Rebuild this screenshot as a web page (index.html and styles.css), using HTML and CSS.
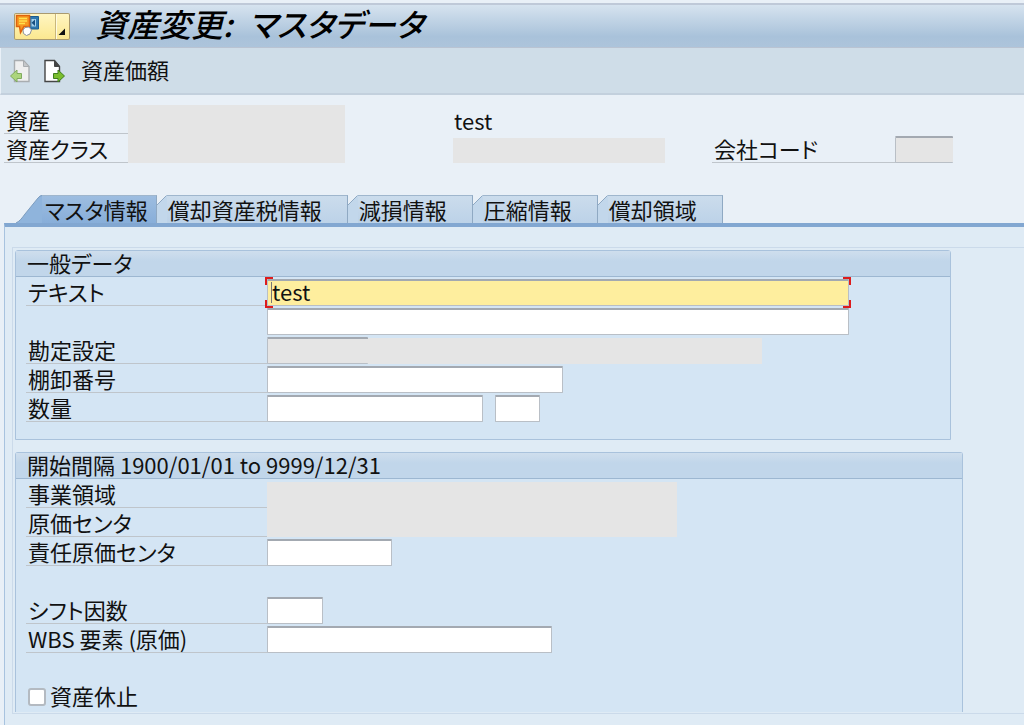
FILE: index.html
```html
<!DOCTYPE html>
<html lang="ja">
	<head>
		<meta charset="utf-8">
		<meta name="viewport" content="width=device-width, initial-scale=1">
		<title>資産変更: マスタデータ</title>
		<link rel="stylesheet" href="styles.css">
	</head>

	<body>
		<header class="titlebar">
			<button type="button" class="services" aria-label="サービス">
				<svg width="56" height="27" viewBox="0 0 56 27" aria-hidden="true">
					<path d="M15 3.500h9.500v12.500H15z" fill="#2f78ae" stroke="#1d5d91"/>
					<path d="M17.500 6h4.500v7.500h-4.500z" fill="#a5d0ea"/>
					<path d="M21 6.500v6.500L17.500 9.700z" fill="#174f80"/>
					<path d="M2.500 2.500h13v11H10L6.500 19.500l-1-6h-3z" fill="#f79a22" stroke="#e0620c" stroke-width="1.500"/>
					<path d="M5 5.500h8M5 8h8M5 10.500h6" stroke="#ffe14d" stroke-width="1.400"/>
					<path d="M9 17l2-2.500 4-.5 2.500 3-1.500 4-3.500 1.500L9.500 20.500z" fill="#fff" stroke="#8d919d"/>
					<path d="M41.500 1v25" stroke="#c9b77c"/>
					<path d="M42.500 1v25" stroke="#fffbe0"/>
					<path d="M51 15.500V22h-6.500z" fill="#111"/>
				</svg>
			</button>
			<h1 class="title">資産変更:&ensp;マスタデータ</h1>
		</header>

		<nav class="toolbar">
			<button type="button" class="tool" aria-label="前の資産" disabled>
				<svg width="22" height="26" viewBox="0 0 22 26" aria-hidden="true">
					<path d="M4.500 2.500h9l5.500 6v15H4.500z" fill="#efefef" stroke="#a9adb0" stroke-width="1.400"/>
					<path d="M13.500 2.500v6H19z" fill="#c6c8ca" stroke="#a9adb0"/>
					<path d="M.5 18L7 12v3.500h4.500v5H7V24z" fill="#acd57c" stroke="#80ab5f"/>
				</svg>
			</button>
			<button type="button" class="tool" aria-label="次の資産">
				<svg width="22" height="26" viewBox="0 0 22 26" aria-hidden="true">
					<path d="M2 2.500h9.500l5 6v15H2z" fill="#fff" stroke="#454545" stroke-width="1.400"/>
					<path d="M11.500 2.500v6h5z" fill="#444" stroke="#454545"/>
					<path d="M21.500 18L15 12v3.500h-4.500v5H15V24z" fill="#7bbd2d" stroke="#3f7f1d"/>
				</svg>
			</button>
			<button type="button" class="tool tool-text">資産価額</button>
		</nav>

		<section class="asset">
			<span class="label asset-no">資産</span>
			<span class="label asset-class">資産クラス</span>
			<div class="masked asset-value"></div>
			<span class="asset-name">test</span>
			<div class="masked asset-class-name"></div>
			<div class="company">
				<label class="label" for="company">会社コード</label>
				<input class="field readonly" type="text" id="company" readonly>
			</div>
		</section>

		<div class="tabs" role="tablist">
			<button type="button" class="tab active" role="tab" aria-selected="true">
				<svg width="26" height="28" viewBox="0 0 26 28" aria-hidden="true">
					<path d="M0 28C4 26 6 23 9 19L22 3Q24 0 26 0V28z" fill="#8fb4dc"/>
					<path d="M0 28C4 26 6 23 9 19L22 3Q24 .5 26 .5" fill="none" stroke="#7d9dbf"/>
				</svg>
				<span class="tab-text">マスタ情報</span>
			</button>
			<button type="button" class="tab" role="tab" aria-selected="false">
				<svg width="10" height="28" viewBox="0 0 10 28" aria-hidden="true">
					<path d="M0 10L10 0V28H0z" fill="#c2d7eb"/>
					<path d="M0 10L9.500 .5" fill="none" stroke="#8fa9c3"/>
				</svg>
				<span class="tab-text">償却資産税情報</span>
			</button>
			<button type="button" class="tab" role="tab" aria-selected="false">
				<svg width="10" height="28" viewBox="0 0 10 28" aria-hidden="true">
					<path d="M0 10L10 0V28H0z" fill="#c2d7eb"/>
					<path d="M0 10L9.500 .5" fill="none" stroke="#8fa9c3"/>
				</svg>
				<span class="tab-text">減損情報</span>
			</button>
			<button type="button" class="tab" role="tab" aria-selected="false">
				<svg width="10" height="28" viewBox="0 0 10 28" aria-hidden="true">
					<path d="M0 10L10 0V28H0z" fill="#c2d7eb"/>
					<path d="M0 10L9.500 .5" fill="none" stroke="#8fa9c3"/>
				</svg>
				<span class="tab-text">圧縮情報</span>
			</button>
			<button type="button" class="tab" role="tab" aria-selected="false">
				<svg width="10" height="28" viewBox="0 0 10 28" aria-hidden="true">
					<path d="M0 10L10 0V28H0z" fill="#c2d7eb"/>
					<path d="M0 10L9.500 .5" fill="none" stroke="#8fa9c3"/>
				</svg>
				<span class="tab-text">償却領域</span>
			</button>
		</div>

		<main class="panel" role="tabpanel">
			<div class="subscreen">
				<!-- General data -->
				<section class="group general">
					<h2 class="group-title">一般データ</h2>
					<div class="row">
						<label class="label" for="text1">テキスト</label>
						<span class="focus"><input class="field w-text" type="text" id="text1" value="test"></span>
					</div>
					<div class="row">
						<input class="field w-text second" type="text" aria-label="テキスト 2">
					</div>
					<div class="row">
						<label class="label" for="account">勘定設定</label>
						<input class="field readonly w-account" type="text" id="account" readonly>
						<div class="masked account-name"></div>
					</div>
					<div class="row">
						<label class="label" for="inventory">棚卸番号</label>
						<input class="field w-inventory" type="text" id="inventory">
					</div>
					<div class="row">
						<label class="label" for="quantity">数量</label>
						<input class="field w-quantity" type="text" id="quantity">
						<input class="field w-unit" type="text" aria-label="数量単位">
					</div>
				</section>

				<!-- Time-dependent data -->
				<section class="group interval">
					<h2 class="group-title">開始間隔 1900/01/01 to 9999/12/31</h2>
					<div class="row">
						<span class="label">事業領域</span>
						<div class="masked w-masked"></div>
					</div>
					<div class="row">
						<span class="label">原価センタ</span>
						<div class="masked w-masked tall"></div>
					</div>
					<div class="row">
						<label class="label" for="respcenter">責任原価センタ</label>
						<input class="field w-center" type="text" id="respcenter">
					</div>
					<div class="row"></div>
					<div class="row">
						<label class="label" for="shift">シフト因数</label>
						<input class="field w-shift" type="text" id="shift">
					</div>
					<div class="row">
						<label class="label" for="wbs">WBS 要素 (原価)</label>
						<input class="field w-wbs" type="text" id="wbs">
					</div>
					<div class="row"></div>
					<div class="row check-row">
						<input class="check" type="checkbox" id="shutdown">
						<label for="shutdown">資産休止</label>
					</div>
				</section>
			</div>
		</main>
	</body>
</html>
```
FILE: styles.css
```css
* {
	box-sizing: border-box;
}
body {
	background-color: #e9f0f7;
	color: #111;
	display: flex;
	flex-direction: column;
	font-family: "Noto Sans CJK JP", sans-serif;
	font-feature-settings: "palt";
	font-size: 22px;
	line-height: 24px;
	margin: 0;
	min-height: 100vh;
	padding-top: 3px;
}
button, input {
	color: inherit;
	font: inherit;
	font-feature-settings: inherit;
}
button {
	background: none;
	border: 0;
	padding: 0;
}
svg {
	display: block;
	flex: none;
}

/* Title and toolbar */
.titlebar {
	align-items: center;
	background: linear-gradient(#d6e3ef, #a9c2da 75%, #adc4db);
	border-bottom: 1px solid #b9c3d2;
	border-top: 2px solid #bfc9d8;
	display: flex;
	gap: 25px;
	height: 45px;
	padding-left: 14px;
}
.services {
	background: linear-gradient(#fff6c4, #fbe78e);
	border-radius: 2px;
	box-shadow: inset 0 0 0 1px #a99a70;
}
.title {
	color: #000;
	font-size: 32px;
	font-style: italic;
	font-weight: 500;
	line-height: 36px;
	margin: 0;
	padding-bottom: 6px;
	white-space: nowrap;
}
.toolbar {
	align-items: center;
	background-color: #cfdde8;
	border-bottom: 2px solid #c3d0dd;
	border-left: 1px solid #e9f0f7;
	display: flex;
	gap: 11px;
	height: 47px;
	padding-left: 9px;
}
.tool-text {
	margin-left: 5px;
	padding-bottom: 4px;
}

/* Asset header */
.asset {
	display: grid;
	grid-template-columns: 124px 217px 108fr 212px 47fr 241px 71fr;
	grid-template-rows: 29px 29px;
	padding: 10px 0 32px 4px;
}
.label {
	border-bottom: 1px solid #bfc5cb;
	height: 29px;
	padding: 2px 0 0 2px;
	white-space: nowrap;
}
.asset-class {
	grid-area: 2 / 1;
}
.masked {
	background-color: #e5e5e5;
}
.asset-value {
	grid-area: 1 / 2 / 3 / 3;
}
.asset-name {
	grid-area: 1 / 4;
	padding: 3px 0 0 1px;
}
.asset-class-name {
	align-self: end;
	grid-area: 2 / 4;
	height: 25px;
}
.company {
	align-items: end;
	display: grid;
	grid-area: 2 / 6;
	grid-template-columns: 1fr 58px;
}

/* Fields */
.field {
	background-color: #fff;
	border: 1px solid #b9bfc6;
	border-radius: 1px;
	border-top: 2px solid #a3a9b1;
	height: 27px;
	line-height: 20px;
	max-width: 100%;
	min-width: 0;
	outline: 0;
	padding: 0 4px 4px;
}
.field.readonly {
	background-color: #e5e5e5;
	border-right: 0;
}
.w-text {
	width: 582px;
}
.w-account {
	width: 101px;
}
.w-inventory {
	width: 296px;
}
.w-quantity {
	width: 216px;
}
.w-unit {
	margin-left: 12px;
	width: 45px;
}
.w-masked {
	height: 26px;
	width: 410px;
}
.w-masked.tall {
	height: 29px;
}
.w-center {
	width: 125px;
}
.w-shift {
	width: 56px;
}
.w-wbs {
	width: 285px;
}
.account-name {
	height: 26px;
	width: 394px;
}
.focus {
	display: flex;
	position: relative;
}
.focus .field {
	background-color: #feee9e;
}
/* red corner marks */
.focus::after {
	--red: linear-gradient(#dd1c1c, #dd1c1c);
	background:
		var(--red) left top / 8px 2px, var(--red) left top / 2px 8px,
		var(--red) right top / 8px 2px, var(--red) right top / 2px 8px,
		var(--red) left bottom / 8px 2px, var(--red) left bottom / 2px 8px,
		var(--red) right bottom / 8px 2px, var(--red) right bottom / 2px 8px;
	background-repeat: no-repeat;
	content: "";
	inset: -2px;
	pointer-events: none;
	position: absolute;
}
/* text cursor */
.focus::before {
	background-color: #777;
	bottom: 3px;
	content: "";
	left: 4px;
	position: absolute;
	top: 3px;
	width: 1px;
}

/* Tabs */
.tabs {
	display: flex;
	padding-left: 16px;
}
.tab {
	display: flex;
	height: 28px;
}
.tab-text {
	background: linear-gradient(#cbdcec, #bcd2e8);
	border-right: 1px solid #8fa9c3;
	border-top: 1px solid #9fb6cd;
	height: 28px;
	padding: 1px 25px 0 1px;
	white-space: nowrap;
}
.tab.active .tab-text {
	background: linear-gradient(#9dbde0, #88aed9);
	padding: 1px 8px 0 3px;
}
.panel {
	background-color: #dfebf5;
	border-left: 1px solid #a8c3df;
	border-top: 4px solid #82a7d1;
	flex: 1;
	margin-left: 4px;
	padding: 20px 0 11px 7px;
}
.subscreen {
	border: 1px solid #cbdaea;
	border-right: 0;
	padding: 2px 0 1px 2px;
}

/* Group boxes */
.group {
	background-color: #d4e5f4;
	border: 1px solid #a9c2dc;
	border-radius: 3px 3px 0 0;
}
.general {
	margin: 0 73px 12px 0;
	padding-bottom: 17px;
}
.interval {
	border-bottom: 0;
	margin-right: 61px;
	padding-bottom: 1px;
}
.group-title {
	background: linear-gradient(#cfdeed, #c1d6ea 40%, #c1d6ea);
	border-bottom: 1px solid #9db7d1;
	font-size: 22px;
	font-weight: normal;
	height: 26px;
	line-height: 22px;
	margin: 0;
	padding-left: 11px;
}
.row {
	align-items: end;
	display: flex;
	height: 29px;
	padding-left: 10px;
}
.row .label {
	flex: none;
	width: 241px;
}
.second {
	margin-left: 241px;
}
.check-row {
	align-items: center;
	gap: 4px;
	padding-left: 12px;
}
.check-row label {
	padding-bottom: 4px;
}
.check {
	appearance: none;
	background-color: #fff;
	border: 2px solid #b4bac1;
	border-radius: 3px;
	height: 18px;
	margin: 0;
	width: 18px;
}
.check:checked {
	background-color: #4f7fb5;
}
```
